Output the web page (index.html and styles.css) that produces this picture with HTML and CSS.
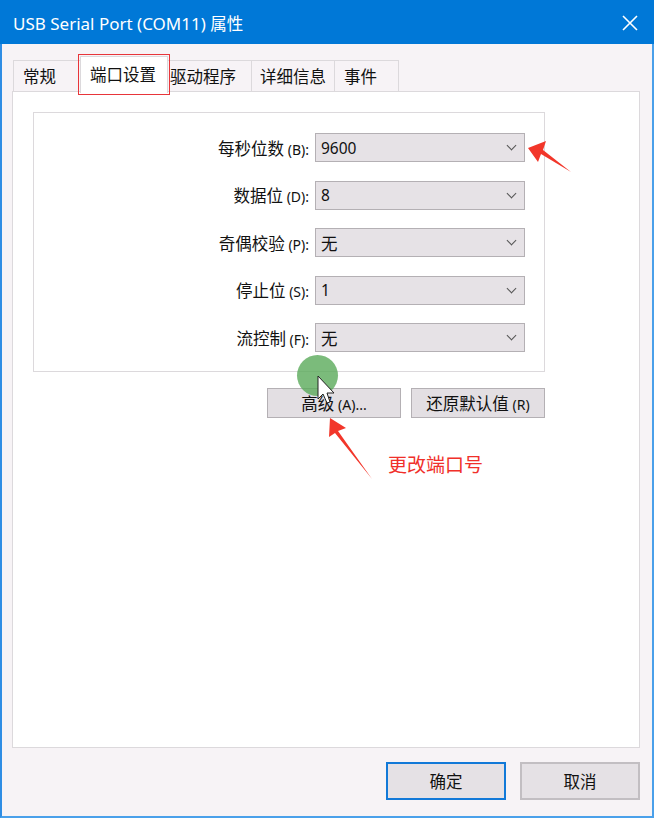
FILE: index.html
```html
<!DOCTYPE html>
<html lang="zh-CN">
<head>
    <meta charset="UTF-8">
    <meta name="viewport" content="width=device-width, initial-scale=1.0">
    <title>USB Serial Port (COM11) 属性</title>
    <link rel="stylesheet" href="styles.css">
</head>
<body>
    <div class="window">
        <!-- Title Bar -->
        <div class="titlebar">
            <span class="title">USB Serial Port (COM11) <span class="cjk">属性</span></span>
            <svg class="close" width="16" height="16" viewBox="0 0 16 16">
                <path d="M1 1 L15 15 M15 1 L1 15" stroke="#fff" stroke-width="1.6"/>
            </svg>
        </div>

        <div class="content">
            <!-- Tabs -->
            <div class="tabs">
                <div class="tab">常规</div>
                <div class="tab active">端口设置</div>
                <div class="tab">驱动程序</div>
                <div class="tab">详细信息</div>
                <div class="tab">事件</div>
            </div>

            <div class="panel">
                <div class="group">
                    <div class="row">
                        <label>每秒位数 <span class="key">(B):</span></label>
                        <div class="combo"><span class="num">9600</span><span class="chev"></span></div>
                    </div>
                    <div class="row">
                        <label>数据位 <span class="key">(D):</span></label>
                        <div class="combo"><span class="num">8</span><span class="chev"></span></div>
                    </div>
                    <div class="row">
                        <label>奇偶校验 <span class="key">(P):</span></label>
                        <div class="combo"><span>无</span><span class="chev"></span></div>
                    </div>
                    <div class="row">
                        <label>停止位 <span class="key">(S):</span></label>
                        <div class="combo"><span class="num">1</span><span class="chev"></span></div>
                    </div>
                    <div class="row">
                        <label>流控制 <span class="key">(F):</span></label>
                        <div class="combo"><span>无</span><span class="chev"></span></div>
                    </div>
                </div>
                <div class="group-buttons">
                    <button class="btn adv">高级 <span class="key">(A)...</span></button>
                    <button class="btn reset">还原默认值 <span class="key">(R)</span></button>
                </div>
            </div>

            <div class="footer">
                <button class="btn big primary">确定</button>
                <button class="btn big">取消</button>
            </div>
        </div>

        <!-- Annotations drawn over the dialog -->
        <div class="note">更改端口号</div>
        <div class="touch"></div>
        <svg class="overlay" width="654" height="818" viewBox="0 0 654 818">
            <!-- arrow to baud rate -->
            <path d="M528 148 L546 141 L543 150 L571 172 L541 154 L538 162 Z" fill="#f2362a"/>
            <!-- arrow to advanced button -->
            <path d="M330 418 L346 428 L338 431 L372 479 L335 433 L329 437 Z" fill="#f2362a"/>
            <!-- mouse cursor -->
            <path d="M318 376 L318 399 L323 394 L327 403 L330 402 L327 393 L334 393 Z" fill="#fff" stroke="#222" stroke-width="1"/>
        </svg>
    </div>
</body>
</html>
```

FILE: styles.css
```css
/* General Styling */
* {
    margin: 0;
    padding: 0;
    box-sizing: border-box;
}

body {
    width: 654px;
    height: 818px;
    overflow: hidden;
    font-family: "Noto Sans", "Noto Sans CJK SC", sans-serif;
    background: #ffffff;
}

.window {
    position: relative;
    width: 654px;
    height: 818px;
    background: #f7f3f6;
    border-left: 2px solid #2f8de4;
    border-right: 2px solid #4aa0ea;
    border-bottom: 2px solid #4aa0ea;
    display: flex;
    flex-direction: column;
}

/* Title Bar */
.titlebar {
    height: 44px;
    background: #0078d7;
    color: #ffffff;
    display: flex;
    align-items: center;
    justify-content: space-between;
    padding: 2px 16px 0 13px;
    margin-left: -2px;
    margin-right: -2px;
}

.title {
    font-family: "Noto Sans", "Noto Sans CJK SC", sans-serif;
    font-size: 17px;
}

.title .cjk {
    font-family: "Noto Sans CJK SC", sans-serif;
    font-size: 16.5px;
}

.content {
    flex: 1;
    display: flex;
    flex-direction: column;
    padding: 16px 12px 0 10px;
}

/* Tabs */
.tabs {
    display: flex;
    height: 32px;
    padding-left: 1px;
    position: relative;
    z-index: 1;
}

.tab {
    height: 32px;
    border: 1px solid #dcd9dc;
    border-right: none;
    background: #f7f3f6;
    font-family: "Noto Sans CJK SC", sans-serif;
    font-size: 16.5px;
    color: #111;
    padding: 3px 8px 0 9px;
    line-height: 24px;
}

.tab:last-child {
    border-right: 1px solid #dcd9dc;
    width: 65px;
}

.tab:nth-child(1) { width: 67px; }
.tab:nth-child(3) { width: 83px; padding-left: 2px; }
.tab:nth-child(4) { width: 83px; padding-left: 8px; }

.tab.active {
    background: #ffffff;
    width: 88px;
    height: 37px;
    margin-top: -4px;
    padding: 5px 0 0 9px;
    border: 1px solid #dcd9dc;
    border-bottom: none;
    outline: 1.5px solid #e8353a;
    outline-offset: 1px;
    position: relative;
    z-index: 2;
}

.tab.active + .tab {
    border-left: none;
}

/* Panel */
.panel {
    height: 657px;
    margin-top: -1px;
    background: #ffffff;
    border: 1px solid #dcd9dc;
    padding: 20px 94px 0 20px;
}

.group {
    height: 260px;
    border: 1px solid #dcd9dc;
    padding: 20px 19px 0 0;
    display: flex;
    flex-direction: column;
    gap: 18.5px;
}

.row {
    display: flex;
    justify-content: flex-end;
    align-items: center;
    gap: 6px;
    height: 29px;
}

.row label {
    font-family: "Noto Sans CJK SC", sans-serif;
    font-size: 16.5px;
    color: #111;
}

.key {
    font-family: "Noto Sans", sans-serif;
    font-size: 14px;
}

.combo {
    width: 210px;
    height: 29px;
    background: #e6e2e6;
    border: 1px solid #b4b0b4;
    display: flex;
    align-items: center;
    justify-content: space-between;
    padding: 0 9px 0 5px;
    font-family: "Noto Sans CJK SC", sans-serif;
    font-size: 16.5px;
    color: #111;
}

.combo .num {
    font-family: "Noto Sans", sans-serif;
    font-size: 15.5px;
}

.chev {
    width: 7px;
    height: 7px;
    border-right: 1.2px solid #555;
    border-bottom: 1.2px solid #555;
    transform: rotate(45deg);
    margin-top: -4px;
}

.group-buttons {
    display: flex;
    justify-content: flex-end;
    gap: 10px;
    margin-top: 16px;
}

.btn {
    height: 30px;
    background: #e3dfe3;
    border: 1px solid #b4b0b4;
    font-family: "Noto Sans CJK SC", sans-serif;
    font-size: 16.5px;
    color: #111;
}

.btn.adv { width: 134px; }
.btn.reset { width: 134px; }

/* Footer */
.footer {
    display: flex;
    justify-content: flex-end;
    gap: 14px;
    padding: 14px 0 0 0;
}

.btn.big {
    width: 120px;
    height: 38px;
    border: 2px solid #c2bec2;
    background: #e5e1e5;
}

.btn.primary {
    border-color: #1279d8;
}

/* Annotations */
.note {
    position: absolute;
    left: 386px;
    top: 450px;
    font-family: "Noto Sans CJK SC", sans-serif;
    font-size: 19px;
    color: #f0302a;
}

.touch {
    position: absolute;
    left: 295px;
    top: 355px;
    width: 41px;
    height: 41px;
    border-radius: 50%;
    background: rgba(90, 170, 90, 0.8);
}

.overlay {
    position: absolute;
    left: -2px;
    top: 0;
    pointer-events: none;
}
```
